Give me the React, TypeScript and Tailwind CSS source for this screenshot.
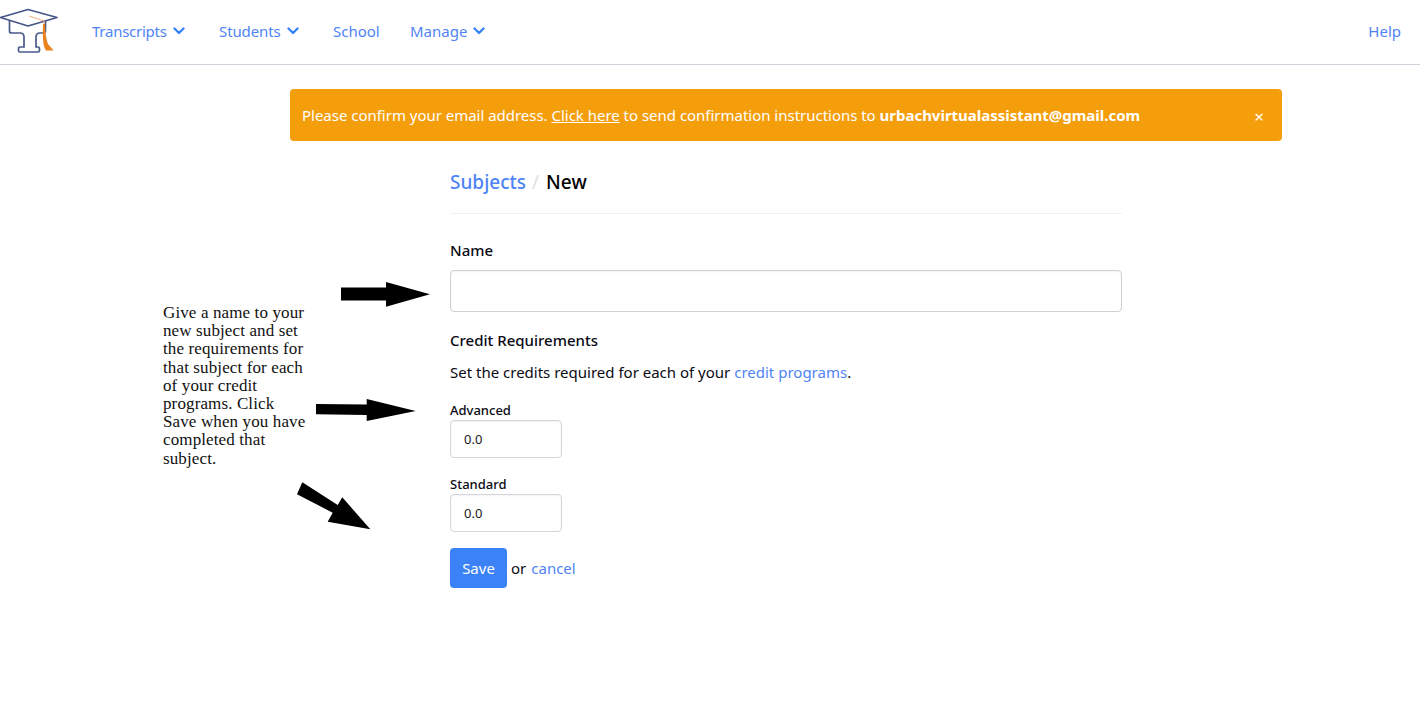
import React from "react";

const sans = "font-['Noto_Sans',sans-serif]";

function Chevron() {
  return (
    <svg width="12" height="8" viewBox="0 0 12 8" className="ml-[6px]" fill="none">
      <path d="M1.500 1.500 L6 6 L10.500 1.500" stroke="#3b82f6" strokeWidth="2.400" strokeLinecap="round" strokeLinejoin="round" />
    </svg>
  );
}

function NavItem({ label, w, chevron }: { label: string; w: string; chevron?: boolean }) {
  return (
    <a className={`flex items-center pb-[2px] text-[15px] text-[#4f84f6] ${w}`}>
      {label}
      {chevron && <Chevron />}
    </a>
  );
}

function Logo() {
  return (
    <svg width="60" height="56" viewBox="0 0 60 56" className="shrink-0 self-start" fill="none">
      <path
        d="M9.500 20 V31 Q9.500 33 11.500 33 H20 Q24 33 24 37 V47 H20 Q18.500 47 18.500 49 V50.500 Q18.500 52 20 52 H38 Q39.500 52 39.500 50.500 V49 Q39.500 47 38 47 H36 V37 Q36 33 40 33 H43.500 Q45.500 33 45.500 31 V20"
        stroke="#4a5a8a"
        strokeWidth="1.700"
      />
      <path d="M0.500 17.500 L28 9.500 L57 17.500 L28 26 Z" fill="#fff" stroke="#46568a" strokeWidth="1.700" strokeLinejoin="round" />
      <path d="M29 16 L44 21 V31" stroke="#f0b27a" strokeWidth="1" />
      <path d="M43 24 H45 Q45.500 38 48 44 L53.500 50.500 L46 50.500 Q42 46 43 24 Z" fill="#e8821e" />
    </svg>
  );
}

function Arrow({ className, w, h, d }: { className: string; w: number; h: number; d: string }) {
  return (
    <svg width={w} height={h} viewBox={`0 0 ${w} ${h}`} className={`absolute ${className}`}>
      <path d={d} fill="#000" />
    </svg>
  );
}

function SmallField({ label }: { label: string }) {
  return (
    <div className="flex flex-col">
      <label className="text-[13px] leading-[20px] font-medium text-[#0a0a14]">{label}</label>
      <div className="flex h-[38px] w-[112px] items-center rounded border border-[#d5d5dc] bg-white pl-[13px] pt-[1px] text-[13px] text-[#1a1a1a] shadow-[inset_0_1px_2px_rgba(10,10,10,0.05)]">
        0.0
      </div>
    </div>
  );
}

export default function App() {
  return (
    <div className={`relative min-h-[707px] bg-white ${sans} text-[#0a0a14]`}>
      <nav className="flex h-[65px] items-center border-b border-[#d0d2dc] bg-white">
        <Logo />
        <div className="ml-[32px] flex h-full items-center">
          <NavItem label="Transcripts" w="w-[127px] tracking-[-0.25px]" chevron />
          <NavItem label="Students" w="w-[114px] tracking-[-0.1px]" chevron />
          <NavItem label="School" w="w-[77px]" />
          <NavItem label="Manage" w="w-[100px]" chevron />
        </div>
        <a className="ml-auto mr-[19px] pb-[2px] text-[15px] text-[#4f84f6]">Help</a>
      </nav>

      <main className="flex flex-col items-center pl-[152px]">
        <div className="mt-[24px] flex h-[52px] w-[992px] items-center rounded bg-[#f59e0b] pl-[12px] text-[15px] text-white">
          <span className="whitespace-nowrap tracking-[-0.02px]">
            Please confirm your email address. <a className="underline">Click here</a> to send confirmation instructions to{" "}
            <strong className="font-bold">urbachvirtualassistant@gmail.com</strong>
          </span>
          <span className="ml-auto mr-[18px] mt-[2px] text-[17px] leading-none">×</span>
        </div>

        <section className="w-[672px]">
          <div className="flex h-[73px] items-center border-b border-[#f1f1f3] pt-[10px] text-[19px] font-medium">
            <a className="text-[#4f84f6]">Subjects</a>
            <span className="ml-[6px] mr-[7px] font-normal text-[#e0e0e0]">/</span>
            <span className="text-black">New</span>
          </div>

          <label className="mt-[25px] block text-[15px] leading-[22px] font-medium">Name</label>
          <div className="mt-[9px] h-[42px] w-full rounded border border-[#d0d0d8] bg-white shadow-[inset_0_1px_2px_rgba(10,10,10,0.05)]" />

          <h2 className="mt-[17px] text-[15px] leading-[22px] font-medium">Credit Requirements</h2>
          <p className="mt-[10px] text-[15px] leading-[22px]">
            Set the credits required for each of your <a className="text-[#4f84f6]">credit programs</a>.
          </p>

          <div className="mt-[17px] flex flex-col gap-[16px]">
            <SmallField label="Advanced" />
            <SmallField label="Standard" />
          </div>

          <div className="mt-[16px] flex items-center text-[15px]">
            <button className="h-[40px] w-[57px] rounded bg-[#3b82f6] text-white">Save</button>
            <span className="ml-[4px]">or</span>
            <a className="ml-[5px] text-[#4f84f6]">cancel</a>
          </div>
        </section>
      </main>

      <p className="absolute left-[163px] top-[304px] whitespace-nowrap font-['Liberation_Serif',serif] text-[17px] leading-[18.200px] tracking-[0.12px] text-[#111]">
        Give a name to your<br />new subject and set<br />the requirements for<br />that subject for each<br />of your credit<br />programs. Click<br />Save when you have<br />completed that<br />subject.
      </p>
      <Arrow className="left-[341px] top-[282px]" w={90} h={25} d="M0 5.500 H45 V0 L89 12.300 L45 24.700 V18.500 H0 Z" />
      <Arrow className="left-[316px] top-[398px]" w={101} h={24} d="M0 6 L50.700 6.500 V1 L99.700 13 L50.700 23 V17 L0 16.300 Z" />
      <Arrow className="left-[297px] top-[482px]" w={74} h={49} d="M5.300 0.300 L40.700 23 L45.300 15.300 L73.300 47.300 L30.700 39.700 L35.700 30.700 L0 12.300 Z" />
    </div>
  );
}
